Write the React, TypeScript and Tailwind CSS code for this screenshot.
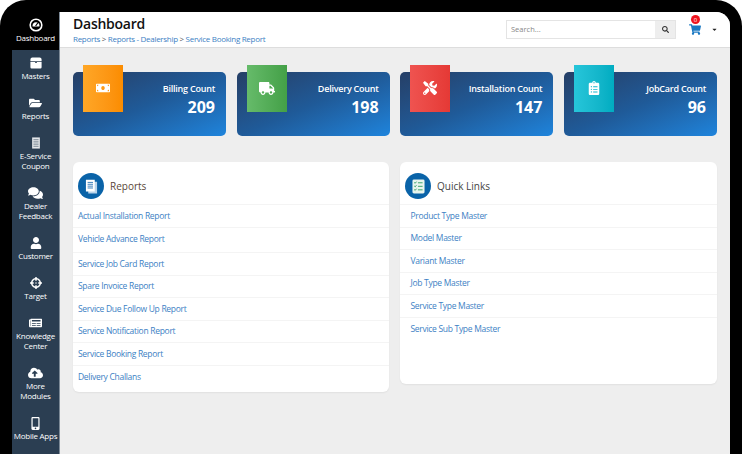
import type { ReactNode } from "react";
import {
  FaCaretDown,
  FaClipboardList,
  FaCloudUploadAlt,
  FaComments,
  FaCrosshairs,
  FaFolderOpen,
  FaMobileAlt,
  FaMoneyBill,
  FaNewspaper,
  FaSearch,
  FaShoppingCart,
  FaTools,
  FaTruck,
  FaUser,
} from "react-icons/fa";

function GaugeIcon() {
  return (
    <svg viewBox="0 0 14 14" className="h-[14px] w-[14px]">
      <circle cx="7" cy="7" r="5.8" fill="none" stroke="white" strokeWidth="1.6" />
      <path d="M3.6 8.6a3.5 3.5 0 1 1 6.8 0z" fill="white" />
      <path d="M6.6 8 9 4.6" stroke="#000" strokeWidth="1.1" />
    </svg>
  );
}

function BoxIcon() {
  return (
    <svg viewBox="0 0 12 12" className="h-3 w-3" fill="white">
      <path d="M2.4 0.6h7.2a2 2 0 0 1 2 2v1.6H0.4V2.6a2 2 0 0 1 2-2z" />
      <path d="M0.4 5h4.8v1h1.6V5h4.8v5.2a1.2 1.2 0 0 1-1.2 1.2H1.6a1.2 1.2 0 0 1-1.2-1.2z" />
    </svg>
  );
}

function CouponIcon() {
  return (
    <svg viewBox="0 0 10 14" className="h-3 w-[10px]">
      <path d="M0.5 0.5h9v13h-9z" fill="#e4e7ea" />
      <path d="M2 3h6M2 5h6M2 7h6M2 9h6M2 11h6" stroke="#7d8a97" strokeWidth="1" />
    </svg>
  );
}

function DocsIcon() {
  return (
    <svg viewBox="0 0 14 16" className="h-[15px] w-[13px]">
      <path d="M3.5 3h9.5v12.5H3.5z" fill="#b9d4ea" />
      <path d="M1 0.8h9.5v12.7H1z" fill="white" />
      <path d="M2.8 3.6h5.8M2.8 5.6h5.8M2.8 7.6h5.8M2.8 9.6h5.8" stroke="#2f78b7" strokeWidth="1" />
    </svg>
  );
}

function ChecklistIcon() {
  return (
    <svg viewBox="0 0 14 16" className="h-[15px] w-[13px]">
      <rect x="0.5" y="0.5" width="13" height="15" rx="1.6" fill="#e8f5ee" />
      <g stroke="#2e9e62" fill="none" strokeWidth="1">
        <path d="M2.4 3.6l1 1 1.4-1.8M6.4 4h5" />
        <path d="M2.4 7.4l1 1 1.4-1.8M6.4 7.8h5" />
        <path d="M2.4 11.2l1 1 1.4-1.8M6.4 11.6h5" />
      </g>
    </svg>
  );
}

const navItems: { icon: ReactNode; label: string[] }[] = [
  { icon: <BoxIcon />, label: ["Masters"] },
  { icon: <FaFolderOpen className="h-3 w-[13px]" />, label: ["Reports"] },
  { icon: <CouponIcon />, label: ["E-Service", "Coupon"] },
  { icon: <FaComments className="h-[14px] w-[15px]" />, label: ["Dealer", "Feedback"] },
  { icon: <FaUser className="h-3 w-3" />, label: ["Customer"] },
  { icon: <FaCrosshairs className="h-3 w-3" />, label: ["Target"] },
  { icon: <FaNewspaper className="h-3 w-[13px]" />, label: ["Knowledge", "Center"] },
  { icon: <FaCloudUploadAlt className="h-[14px] w-[15px]" />, label: ["More", "Modules"] },
  { icon: <FaMobileAlt className="h-[13px] w-[13px]" />, label: ["Mobile Apps"] },
];

const counts = [
  { label: "Billing Count", value: "209", tile: "from-[#ffa726] to-[#fb8c00]", icon: <FaMoneyBill className="h-[14px] w-[14px]" /> },
  { label: "Delivery Count", value: "198", tile: "from-[#66bb6a] to-[#43a047]", icon: <FaTruck className="h-[15px] w-[16px]" /> },
  { label: "Installation Count", value: "147", tile: "from-[#ef5350] to-[#e53935]", icon: <FaTools className="h-[14px] w-[14px]" /> },
  { label: "JobCard Count", value: "96", tile: "from-[#26c6da] to-[#00acc1]", icon: <FaClipboardList className="h-[14px] w-[12px]" /> },
];

const reports = [
  { name: "Actual Installation Report", h: "h-[23px]" },
  { name: "Vehicle Advance Report", h: "h-[25px] pb-[3px]" },
  { name: "Service Job Card Report", h: "h-[22.5px]" },
  { name: "Spare Invoice Report", h: "h-[22.5px]" },
  { name: "Service Due Follow Up Report", h: "h-[22.5px]" },
  { name: "Service Notification Report", h: "h-[22.5px]" },
  { name: "Service Booking Report", h: "h-[22.5px]" },
  { name: "Delivery Challans", h: "h-[22.5px]" },
];

const quickLinks = [
  "Product Type Master",
  "Model Master",
  "Variant Master",
  "Job Type Master",
  "Service Type Master",
  "Service Sub Type Master",
];

function PanelHeader({ icon, title, titleColor }: { icon: ReactNode; title: string; titleColor: string }) {
  return (
    <div className="flex h-[43px] items-center gap-[6px] border-b border-[#f4f4f4] pl-[5px] pt-[11px] pb-[5px]">
      <div className="flex h-[26px] w-[26px] items-center justify-center rounded-full bg-[#0a63a8]">{icon}</div>
      <h3 className={`text-[10px] leading-none ${titleColor}`}>{title}</h3>
    </div>
  );
}

export default function App() {
  return (
    <div className="h-[454px] w-[742px] overflow-hidden bg-white font-['Open_Sans',sans-serif]">
      <div className="flex h-full rounded-t-[26px] bg-black pl-3 pr-3 pt-3">
        <aside className="w-[48px] shrink-0 border-r border-[#7d8a97] bg-[#2b3e52] text-white">
          <div className="flex h-[38px] flex-col items-center bg-black pt-[6px]">
            <GaugeIcon />
            <span className="mt-[1px] text-[8px] leading-[10px] tracking-[-0.25px]">Dashboard</span>
          </div>
          {navItems.map((item) => (
            <div key={item.label[0]} className="flex flex-col items-center pb-[9px] pt-[7px]">
              <div className="flex h-3 items-center justify-center">{item.icon}</div>
              <div className="mt-[2px] text-center text-[8px] leading-[10px] tracking-[-0.25px] whitespace-nowrap">
                {item.label.map((line) => (
                  <div key={line}>{line}</div>
                ))}
              </div>
            </div>
          ))}
        </aside>

        <main className="flex min-w-0 flex-1 flex-col overflow-hidden rounded-tr-[14px] bg-[#eeeeee]">
          <header className="flex h-[36px] shrink-0 items-center border-b border-[#dddddd] bg-white pl-[13px] pr-[12px]">
            <div>
              <h1 className="text-[14px] font-semibold leading-[18px] tracking-[-0.25px] text-[#111111]">Dashboard</h1>
              <p className="text-[8px] leading-[11px] tracking-[-0.3px] text-[#3d7fc4]">
                Reports <span className="text-[#555555]">&gt;</span> Reports - Dealership{" "}
                <span className="text-[#555555]">&gt;</span> Service Booking Report
              </p>
            </div>
            <div className="ml-auto flex h-[19px] w-[170px] border border-[#e4e4e4]">
              <span className="flex-1 pl-[4px] text-[7.5px] leading-[17px] text-[#888888]">Search...</span>
              <span className="flex w-[20px] items-center justify-center bg-[#eeeeee]">
                <FaSearch className="h-[7px] w-[7px] text-[#333333]" />
              </span>
            </div>
            <div className="relative ml-[13px]">
              <FaShoppingCart className="h-[11px] w-[12px] text-[#1a78c2]" />
              <span className="absolute -top-[9px] left-[2px] flex h-[9px] w-[9px] items-center justify-center rounded-full bg-[#f0141e] text-[6px] leading-none text-white">
                0
              </span>
            </div>
            <FaCaretDown className="ml-[10px] h-[7px] w-[7px] text-[#222222]" />
          </header>

          <div className="px-[13px] pt-[24px]">
            <div className="grid grid-cols-4 gap-[10.67px]">
              {counts.map((c) => (
                <div
                  key={c.label}
                  className="relative h-[64px] rounded-[5px] bg-gradient-to-br from-[#253f66] via-[#1f5a98] to-[#1e84dc] pr-[11px] pt-[11px] text-right text-white"
                >
                  <div className={`absolute -top-[7.5px] left-[10px] flex h-[47.5px] w-[40px] items-center justify-center bg-gradient-to-r text-white ${c.tile}`}>
                    {c.icon}
                  </div>
                  <div className="text-[9px] font-semibold leading-[12px] tracking-[-0.23px]">{c.label}</div>
                  <div className="mt-[1px] text-[16px] font-bold leading-[22px]">{c.value}</div>
                </div>
              ))}
            </div>

            <div className="mt-[26px] grid grid-cols-[316px_317px] items-start gap-[11px]">
              <section className="h-[230px] rounded-[6px] bg-white shadow-[0_1px_2px_rgba(0,0,0,0.06)]">
                <PanelHeader icon={<DocsIcon />} title="Reports" titleColor="text-[#5a4638]" />
                {reports.map((r) => (
                  <a
                    key={r.name}
                    className={`flex items-center border-b border-[#f4f4f4] pl-[5px] pt-[1px] text-[8.5px] tracking-[-0.3px] text-[#3d7fc4] last:border-b-0 ${r.h}`}
                  >
                    {r.name}
                  </a>
                ))}
              </section>

              <section className="h-[222px] rounded-[6px] bg-white shadow-[0_1px_2px_rgba(0,0,0,0.06)]">
                <PanelHeader icon={<ChecklistIcon />} title="Quick Links" titleColor="text-[#444444]" />
                {quickLinks.map((name) => (
                  <a
                    key={name}
                    className="flex h-[22.5px] items-center border-b border-[#f4f4f4] pl-[10.5px] pt-[1px] text-[8.5px] tracking-[-0.3px] text-[#3d7fc4] last:border-b-0"
                  >
                    {name}
                  </a>
                ))}
              </section>
            </div>
          </div>
        </main>
      </div>
    </div>
  );
}
